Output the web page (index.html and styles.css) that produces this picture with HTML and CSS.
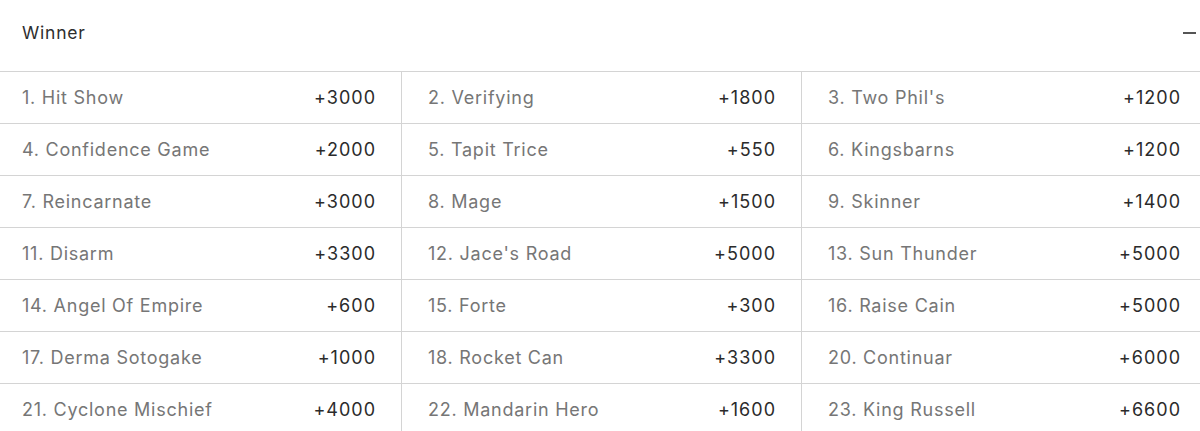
FILE: index.html
```html
<!DOCTYPE html>
<html lang="en">
<head>
<meta charset="utf-8">
<title>Winner</title>
<link rel="stylesheet" href="styles.css">
</head>
<body>
<section class="market">
  <header class="market-head">
    <span class="market-title">Winner</span>
    <span class="collapse" aria-label="collapse"></span>
  </header>
  <div class="grid">
    <div class="row">
      <div class="cell"><span class="name">1. Hit Show</span><span class="odds">+3000</span></div>
      <div class="cell"><span class="name">2. Verifying</span><span class="odds">+1800</span></div>
      <div class="cell"><span class="name">3. Two Phil's</span><span class="odds">+1200</span></div>
    </div>
    <div class="row">
      <div class="cell"><span class="name">4. Confidence Game</span><span class="odds">+2000</span></div>
      <div class="cell"><span class="name">5. Tapit Trice</span><span class="odds">+550</span></div>
      <div class="cell"><span class="name">6. Kingsbarns</span><span class="odds">+1200</span></div>
    </div>
    <div class="row">
      <div class="cell"><span class="name">7. Reincarnate</span><span class="odds">+3000</span></div>
      <div class="cell"><span class="name">8. Mage</span><span class="odds">+1500</span></div>
      <div class="cell"><span class="name">9. Skinner</span><span class="odds">+1400</span></div>
    </div>
    <div class="row">
      <div class="cell"><span class="name">11. Disarm</span><span class="odds">+3300</span></div>
      <div class="cell"><span class="name">12. Jace's Road</span><span class="odds">+5000</span></div>
      <div class="cell"><span class="name">13. Sun Thunder</span><span class="odds">+5000</span></div>
    </div>
    <div class="row">
      <div class="cell"><span class="name">14. Angel Of Empire</span><span class="odds">+600</span></div>
      <div class="cell"><span class="name">15. Forte</span><span class="odds">+300</span></div>
      <div class="cell"><span class="name">16. Raise Cain</span><span class="odds">+5000</span></div>
    </div>
    <div class="row">
      <div class="cell"><span class="name">17. Derma Sotogake</span><span class="odds">+1000</span></div>
      <div class="cell"><span class="name">18. Rocket Can</span><span class="odds">+3300</span></div>
      <div class="cell"><span class="name">20. Continuar</span><span class="odds">+6000</span></div>
    </div>
    <div class="row">
      <div class="cell"><span class="name">21. Cyclone Mischief</span><span class="odds">+4000</span></div>
      <div class="cell"><span class="name">22. Mandarin Hero</span><span class="odds">+1600</span></div>
      <div class="cell"><span class="name">23. King Russell</span><span class="odds">+6600</span></div>
    </div>
  </div>
</section>
</body>
</html>
```
FILE: styles.css
```css
html, body {
  margin: 0;
  padding: 0;
  background: #ffffff;
}
body {
  font-family: Inter, "Noto Sans", "Liberation Sans", sans-serif;
  color: #333333;
  overflow: hidden;
}
.market-head {
  height: 71px;
  display: flex;
  align-items: center;
  justify-content: space-between;
  padding: 0 4px 7px 22px;
  box-sizing: border-box;
}
.market-title {
  font-size: 17.5px;
  letter-spacing: 0.8px;
  color: #2e2e2e;
}
.collapse {
  width: 13px;
  height: 1.5px;
  background: #555555;
  margin-top: 2px;
}
.grid {
  border-top: 1px solid #d4d4d4;
}
.row {
  display: grid;
  grid-template-columns: 401px 400px 399px;
  height: 52px;
  border-bottom: 1px solid #d4d4d4;
  box-sizing: border-box;
}
.cell {
  display: flex;
  align-items: center;
  justify-content: space-between;
  padding: 0 26px 0 26px;
  font-size: 18px;
  border-left: 1px solid #d4d4d4;
}
.cell:first-child {
  border-left: none;
  padding-left: 22px;
}
.cell:last-child {
  padding-right: 20px;
}
.name {
  color: #767676;
  letter-spacing: 0.75px;
}
.odds {
  color: #2b2b2b;
  letter-spacing: 1px;
  margin-right: -1px;
}
```
